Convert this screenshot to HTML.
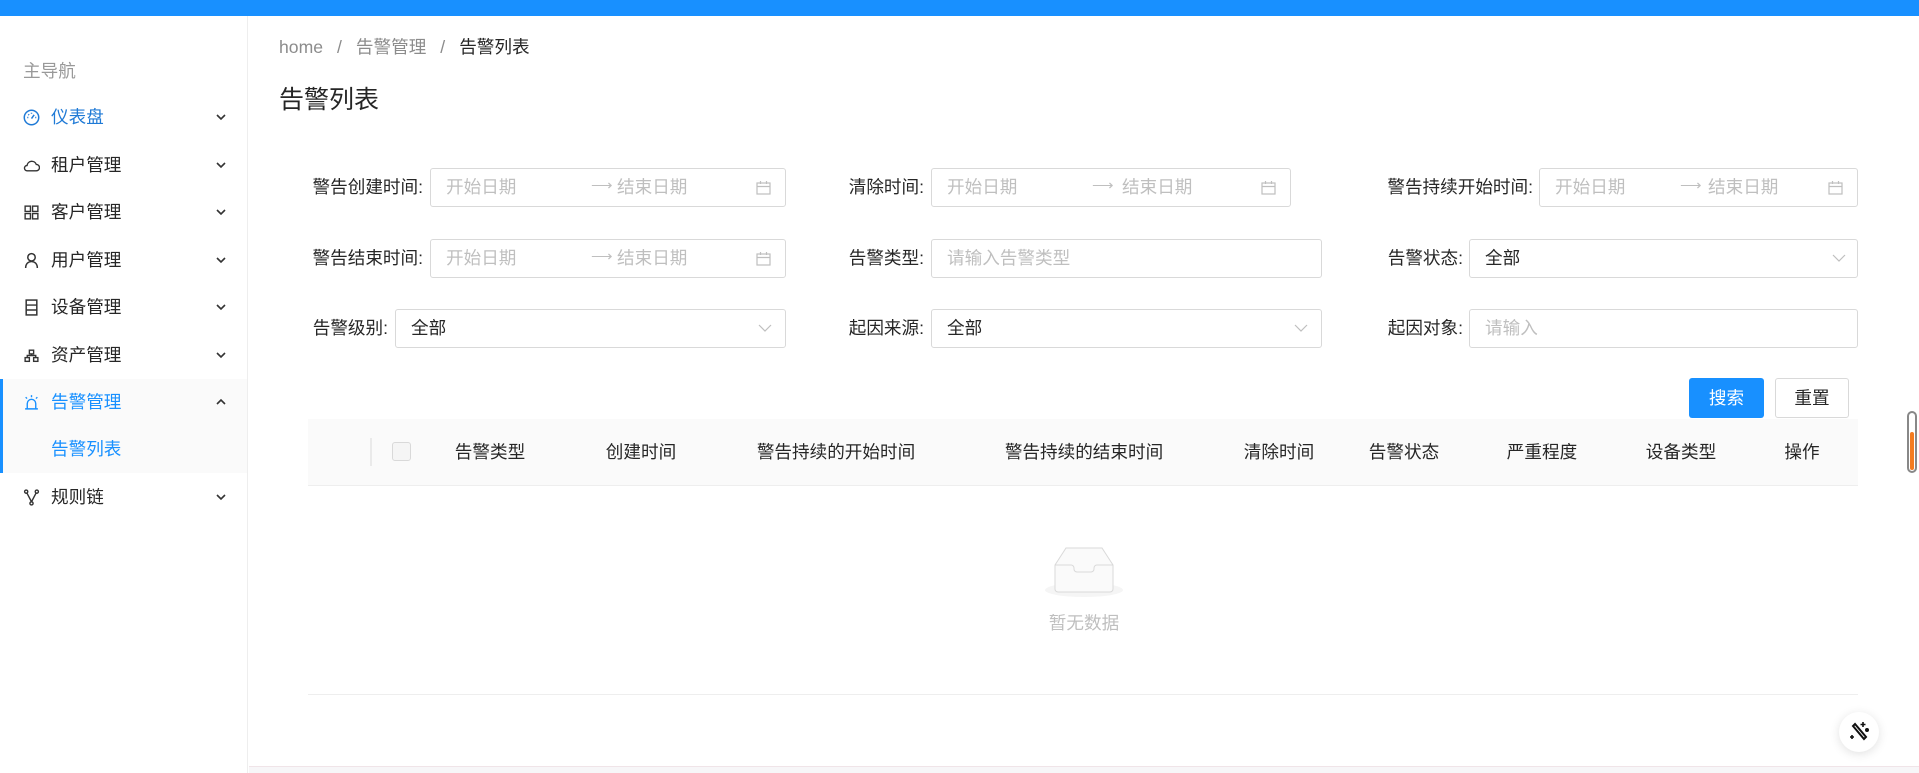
<!DOCTYPE html>
<html><head><meta charset="utf-8">
<style>
*{box-sizing:border-box;margin:0;padding:0}
body{width:1919px;height:773px;overflow:hidden;background:#fff;font-family:"Liberation Sans","Noto Sans CJK SC",sans-serif;font-size:17.6px;color:#262626;position:relative}
.a{position:absolute}
.top{left:0;top:0;width:1919px;height:16px;background:#1890ff}
.side{left:0;top:16px;width:248px;height:757px;border-right:1px solid #eee;background:#fff}
.mi{position:absolute;left:0;width:247px;height:47px;line-height:47px}
.mi .ic{position:absolute;left:23px;top:15px;width:17px;height:17px}
.mi .t{position:absolute;left:51px}
.mi .ch{position:absolute;left:215px;top:17px;width:12px;height:12px}
.lbl{position:absolute;white-space:nowrap;line-height:39px;text-align:right}
.inp{position:absolute;height:39px;border:1px solid #d9d9d9;border-radius:3px;background:#fff;line-height:37px;padding-left:15px;color:#bfbfbf}
.arr{position:absolute;top:0;font-size:15px;line-height:33px}
.th{position:absolute;top:419px;line-height:67px;white-space:nowrap;transform:translateX(-50%)}
</style></head><body>
<div class="a top"></div>
<div class="a side">
 <div class="a" style="left:23px;top:44px;color:#999;line-height:22px">主导航</div>
 <div class="mi" style="top:78px;color:#1f7ad6"><svg class="ic" viewBox="0 0 16 16" fill="none" stroke="#1f7ad6" stroke-width="1.4"><circle cx="8" cy="8" r="6.8"/><path d="M8 9 L10.5 5.5M4 8h1M8 3.5v1M11.5 8h1M5 5l.7.7"/></svg><span class="t">仪表盘</span><svg class="ch" viewBox="0 0 12 12" fill="none" stroke="#333" stroke-width="1.6"><path d="M2 4l4 4 4-4"/></svg></div>
 <div class="mi" style="top:126px"><svg class="ic" viewBox="0 0 16 16" fill="none" stroke="#333" stroke-width="1.3"><path d="M4 13h8.5a3 3 0 0 0 0-6 4.5 4.5 0 0 0-8.7 1A2.5 2.5 0 0 0 4 13z"/></svg><span class="t">租户管理</span><svg class="ch" viewBox="0 0 12 12" fill="none" stroke="#333" stroke-width="1.6"><path d="M2 4l4 4 4-4"/></svg></div>
 <div class="mi" style="top:173px"><svg class="ic" viewBox="0 0 16 16" fill="none" stroke="#333" stroke-width="1.3"><rect x="2" y="2" width="5" height="5"/><rect x="9" y="2" width="5" height="5"/><rect x="2" y="9" width="5" height="5"/><rect x="9" y="9" width="5" height="5"/></svg><span class="t">客户管理</span><svg class="ch" viewBox="0 0 12 12" fill="none" stroke="#333" stroke-width="1.6"><path d="M2 4l4 4 4-4"/></svg></div>
 <div class="mi" style="top:221px"><svg class="ic" viewBox="0 0 16 16" fill="none" stroke="#333" stroke-width="1.4"><circle cx="8" cy="5" r="3.5"/><path d="M2.5 15c0-4 2.5-6 5.5-6s5.5 2 5.5 6"/></svg><span class="t">用户管理</span><svg class="ch" viewBox="0 0 12 12" fill="none" stroke="#333" stroke-width="1.6"><path d="M2 4l4 4 4-4"/></svg></div>
 <div class="mi" style="top:268px"><svg class="ic" viewBox="0 0 16 16" fill="none" stroke="#333" stroke-width="1.4"><rect x="3" y="1" width="10" height="14"/><path d="M3 5.7h10M3 10.3h10"/></svg><span class="t">设备管理</span><svg class="ch" viewBox="0 0 12 12" fill="none" stroke="#333" stroke-width="1.6"><path d="M2 4l4 4 4-4"/></svg></div>
 <div class="mi" style="top:316px"><svg class="ic" viewBox="0 0 16 16" fill="none" stroke="#333" stroke-width="1.3"><rect x="6" y="3" width="4" height="3.5"/><rect x="2" y="10" width="4" height="3.5"/><rect x="10" y="10" width="4" height="3.5"/><path d="M4 10V8h8v2M8 6.5V8"/></svg><span class="t">资产管理</span><svg class="ch" viewBox="0 0 12 12" fill="none" stroke="#333" stroke-width="1.6"><path d="M2 4l4 4 4-4"/></svg></div>
 <div class="a" style="left:0;top:363px;width:247px;height:94px;background:#fafafa;border-left:3px solid #1890ff"></div>
 <div class="mi" style="top:363px;color:#1890ff"><svg class="ic" viewBox="0 0 16 16" fill="none" stroke="#1890ff" stroke-width="1.3"><path d="M4 14V9a4 4 0 0 1 8 0v5M2 14h12M8 1v2M2.5 3l1.3 1.3M13.5 3l-1.3 1.3"/></svg><span class="t">告警管理</span><svg class="ch" viewBox="0 0 12 12" fill="none" stroke="#333" stroke-width="1.6"><path d="M2 8l4-4 4 4"/></svg></div>
 <div class="mi" style="top:410px;color:#1890ff"><span class="t">告警列表</span></div>
 <div class="mi" style="top:458px"><svg class="ic" viewBox="0 0 16 16" fill="none" stroke="#333" stroke-width="1.3"><circle cx="3" cy="2.5" r="1.5"/><circle cx="13" cy="2.5" r="1.5"/><circle cx="8" cy="13.5" r="1.5"/><path d="M3.7 3.8L8 12M12.3 3.8L8 12"/></svg><span class="t">规则链</span><svg class="ch" viewBox="0 0 12 12" fill="none" stroke="#333" stroke-width="1.6"><path d="M2 4l4 4 4-4"/></svg></div>
</div>

<div class="a" style="left:279px;top:36px;line-height:22px;color:#8c8c8c">home<span style="margin:0 14px">/</span>告警管理<span style="margin:0 14px">/</span><span style="color:#262626">告警列表</span></div>
<div class="a" style="left:279px;top:84px;font-size:25px;line-height:32px;color:#262626">告警列表</div>

<div class="lbl" style="right:1496px;top:168px">警告创建时间:</div>
<div class="inp" style="left:430px;top:168px;width:356px">开始日期<span class="arr" style="left:160px">⟶</span><span class="a" style="left:186px">结束日期</span><svg class="a" style="left:325px;top:12px" width="15" height="14" viewBox="0 0 15 14" fill="none" stroke="#bfbfbf" stroke-width="1.2"><rect x="1" y="2" width="13" height="11"/><path d="M1 5.5h13M4.5 0v3M10.5 0v3"/></svg></div>
<div class="lbl" style="right:995px;top:168px">清除时间:</div>
<div class="inp" style="left:931px;top:168px;width:360px">开始日期<span class="arr" style="left:160px">⟶</span><span class="a" style="left:190px">结束日期</span><svg class="a" style="left:329px;top:12px" width="15" height="14" viewBox="0 0 15 14" fill="none" stroke="#bfbfbf" stroke-width="1.2"><rect x="1" y="2" width="13" height="11"/><path d="M1 5.5h13M4.5 0v3M10.5 0v3"/></svg></div>
<div class="lbl" style="right:386px;top:168px">警告持续开始时间:</div>
<div class="inp" style="left:1539px;top:168px;width:319px">开始日期<span class="arr" style="left:140px">⟶</span><span class="a" style="left:168px">结束日期</span><svg class="a" style="left:288px;top:12px" width="15" height="14" viewBox="0 0 15 14" fill="none" stroke="#bfbfbf" stroke-width="1.2"><rect x="1" y="2" width="13" height="11"/><path d="M1 5.5h13M4.5 0v3M10.5 0v3"/></svg></div>

<div class="lbl" style="right:1496px;top:239px">警告结束时间:</div>
<div class="inp" style="left:430px;top:239px;width:356px">开始日期<span class="arr" style="left:160px">⟶</span><span class="a" style="left:186px">结束日期</span><svg class="a" style="left:325px;top:12px" width="15" height="14" viewBox="0 0 15 14" fill="none" stroke="#bfbfbf" stroke-width="1.2"><rect x="1" y="2" width="13" height="11"/><path d="M1 5.5h13M4.5 0v3M10.5 0v3"/></svg></div>
<div class="lbl" style="right:995px;top:239px">告警类型:</div>
<div class="inp" style="left:931px;top:239px;width:391px">请输入告警类型</div>
<div class="lbl" style="right:456px;top:239px">告警状态:</div>
<div class="inp" style="left:1469px;top:239px;width:389px;color:#262626">全部<svg class="a" style="left:362px;top:14px" width="14" height="9" viewBox="0 0 14 9" fill="none" stroke="#bfbfbf" stroke-width="1.2"><path d="M1 1l6 6 6-6"/></svg></div>

<div class="lbl" style="right:1531px;top:309px">告警级别:</div>
<div class="inp" style="left:395px;top:309px;width:391px;color:#262626">全部<svg class="a" style="left:362px;top:14px" width="14" height="9" viewBox="0 0 14 9" fill="none" stroke="#bfbfbf" stroke-width="1.2"><path d="M1 1l6 6 6-6"/></svg></div>
<div class="lbl" style="right:995px;top:309px">起因来源:</div>
<div class="inp" style="left:931px;top:309px;width:391px;color:#262626">全部<svg class="a" style="left:362px;top:14px" width="14" height="9" viewBox="0 0 14 9" fill="none" stroke="#bfbfbf" stroke-width="1.2"><path d="M1 1l6 6 6-6"/></svg></div>
<div class="lbl" style="right:456px;top:309px">起因对象:</div>
<div class="inp" style="left:1469px;top:309px;width:389px">请输入</div>

<div class="a" style="left:1689px;top:378px;width:75px;height:40px;background:#1890ff;color:#fff;border-radius:3px;text-align:center;line-height:40px">搜索</div>
<div class="a" style="left:1775px;top:378px;width:74px;height:40px;border:1px solid #d9d9d9;border-radius:3px;text-align:center;line-height:38px">重置</div>

<div class="a" style="left:308px;top:419px;width:1550px;height:67px;background:#fafafa;border-bottom:1px solid #eee"></div>
<div class="a" style="left:370px;top:438px;width:2px;height:28px;background:#eaeaea"></div>
<div class="a" style="left:392px;top:442px;width:19px;height:19px;border:1px solid #d9d9d9;border-radius:3px;background:#f5f5f5"></div>
<div class="th" style="left:490px">告警类型</div>
<div class="th" style="left:641px">创建时间</div>
<div class="th" style="left:836px">警告持续的开始时间</div>
<div class="th" style="left:1084px">警告持续的结束时间</div>
<div class="th" style="left:1279px">清除时间</div>
<div class="th" style="left:1404px">告警状态</div>
<div class="th" style="left:1542px">严重程度</div>
<div class="th" style="left:1681px">设备类型</div>
<div class="th" style="left:1802px">操作</div>

<svg class="a" style="left:1044px;top:545px" width="80" height="54" viewBox="0 0 80 54"><ellipse cx="40" cy="45" rx="39" ry="7" fill="#f5f5f5"/><path d="M11 20 L22 3 H58 L69 20 V44 a3 3 0 0 1-3 3 H14 a3 3 0 0 1-3-3z" fill="#fafafa" stroke="#d9d9d9" stroke-width="1"/><path d="M11 20 H27 a3 3 0 0 1 3 3 v1 a3 3 0 0 0 3 3 H47 a3 3 0 0 0 3-3 v-1 a3 3 0 0 1 3-3 H69" fill="none" stroke="#d9d9d9"/></svg>
<div class="a" style="left:1045px;top:612px;width:78px;text-align:center;color:#bfbfbf;line-height:22px">暂无数据</div>
<div class="a" style="left:308px;top:694px;width:1550px;height:1px;background:#eee"></div>

<div class="a" style="left:249px;top:766px;width:1670px;height:7px;background:#f7f6f8;border-top:1px solid #f0e4e8"></div>

<div class="a" style="left:1839px;top:712px;width:40px;height:40px;border-radius:50%;background:#fff;box-shadow:0 2px 10px rgba(0,0,0,.12)"></div>
<svg class="a" style="left:1847px;top:720px" width="24" height="24" viewBox="0 0 24 24" fill="none" stroke="#111" stroke-width="2"><path d="M6 6l11 13 2-2L8 4z"/><path d="M16 2v5M13.5 4.5h5M5 15v4M3 17h4" stroke-width="1.6"/><circle cx="20" cy="10" r="1" fill="#111"/></svg>

<div class="a" style="left:1907px;top:411px;width:10px;height:62px;border:2px solid #888;border-radius:5px"></div>
<div class="a" style="left:1910px;top:432px;width:4px;height:38px;background:#f47b20;border-radius:2px"></div>
</body></html>
